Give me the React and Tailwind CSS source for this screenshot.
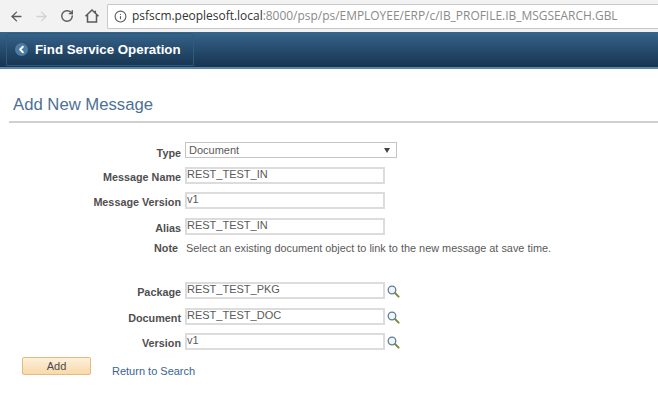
import React from 'react';
import { ArrowLeft, ArrowRight, RotateCw, Info, ChevronLeft } from 'lucide-react';

const Label = ({ children, className = '' }) => (
  <div className={`w-[185px] shrink-0 text-right text-[10.8px] leading-[13px] font-bold text-[#4f4f4f] pr-[4px] ${className}`}>
    {children}
  </div>
);

const SearchIcon = () => (
  <svg width="14" height="14" viewBox="0 0 14 14" className="ml-[1px] mt-[2px] shrink-0">
    <circle cx="6" cy="6" r="3.8" fill="#eef4f8" stroke="#5c7f95" strokeWidth="1.3" />
    <path d="M9 9l3.6 3.6" stroke="#7d8a45" strokeWidth="2" strokeLinecap="round" />
  </svg>
);

const Field = ({ label, value, className = '', search = false }) => (
  <div className={`flex items-start ${className}`}>
    <Label className="pt-[4px]">{label}</Label>
    <div className="w-[200px] h-[17px] border-2 border-[#dcdcdc] bg-white text-[11px] leading-[11px] text-[#5a5a5a] overflow-hidden">
      {value}
    </div>
    {search && <SearchIcon />}
  </div>
);

export default function App() {
  return (
    <div className="w-[658px] h-[415px] overflow-hidden bg-white font-['Liberation_Sans',Arial,sans-serif]">
      {/* Browser bar */}
      <div className="h-[32px] bg-[#f2f2f2] flex items-center pl-[9px]">
        <ArrowLeft className="w-[15px] h-[15px] text-[#5a5a5a]" strokeWidth={2.2} />
        <ArrowRight className="w-[15px] h-[15px] text-[#d2d2d2] ml-[10px]" strokeWidth={2.2} />
        <RotateCw className="w-[14px] h-[14px] text-[#5a5a5a] ml-[11px]" strokeWidth={2.4} />
        <svg width="16" height="16" viewBox="0 0 16 16" fill="none" stroke="#5a5a5a" strokeWidth="1.5" className="ml-[10px] shrink-0">
          <path d="M1.5 8.2 8 2l6.5 6.2M3.5 7v7h9V7M11.3 2.8v2.4" />
        </svg>
        <div className="ml-[7px] flex-1 h-[25px] bg-white border border-[#c8c8c8] border-r-0 rounded-l-[2px] flex items-center pl-[6px] text-[11.95px] font-['Open_Sans',sans-serif] whitespace-nowrap">
          <Info className="w-[13px] h-[13px] text-[#5a5a5a] mr-[5px] shrink-0" strokeWidth={2} />
          <span className="text-[#333]">psfscm.peoplesoft.local</span>
          <span className="text-[#8a8a8a]">:8000/psp/ps/EMPLOYEE/ERP/c/IB_PROFILE.IB_MSGSEARCH.GBL</span>
        </div>
      </div>

      {/* Nav banner */}
      <div className="h-[37px] bg-gradient-to-b from-[#37658c] to-[#173450] border-b-2 border-[#5b87ab] pl-[6px] pt-[1px]">
        <div className="h-[33px] w-[188px] border border-[#2f5a7f] rounded-t-[3px] flex items-center pl-[8px]">
          <div className="w-[13px] h-[13px] rounded-full bg-[#4d7ba1] flex items-center justify-center">
            <ChevronLeft className="w-[11px] h-[11px] text-white" strokeWidth={4} />
          </div>
          <span className="ml-[7px] text-[13.3px] font-bold text-white">Find Service Operation</span>
        </div>
      </div>

      {/* Title */}
      <div className="ml-[9px] mt-[26px] h-[28px] pt-[1px] border-b-2 border-[#d0d0d0] pl-[4px] text-[16.7px] leading-[18px] text-[#4d7095]">
        Add New Message
      </div>

      {/* Form */}
      <div className="mt-[19px]">
        <div className="flex items-start">
          <Label className="pt-[5px]">Type</Label>
          <div className="w-[212px] h-[16px] border border-[#c4c4c4] bg-white flex items-center justify-between pl-[3px] pr-[6px] text-[11px] text-[#5a5a5a]">
            <span>Document</span>
            <span className="w-0 h-0 border-l-[3px] border-r-[3px] border-t-[5px] border-l-transparent border-r-transparent border-t-[#444]" />
          </div>
        </div>
        <Field label="Message Name" value="REST_TEST_IN" className="mt-[7px]" />
        <Field label="Message Version" value="v1" className="mt-[8px]" />
        <Field label="Alias" value="REST_TEST_IN" className="mt-[9px]" />
        <div className="flex items-start mt-[7px]">
          <Label className="pr-[7px]">Note</Label>
          <div className="text-[10.9px] leading-[13px] text-[#5a5a5a] whitespace-nowrap pl-[1px]">
            Select an existing document object to link to the new message at save time.
          </div>
        </div>
        <Field label="Package" value="REST_TEST_PKG" search className="mt-[27px]" />
        <Field label="Document" value="REST_TEST_DOC" search className="mt-[9px]" />
        <Field label="Version" value="v1" search className="mt-[8px]" />
        <div className="flex items-start ml-[22px] mt-[7px]">
          <button className="w-[69px] h-[18px] rounded-[2px] border border-[#e8b87c] bg-gradient-to-b from-[#fdf0dc] to-[#f8d9aa] text-[11px] leading-[14px] text-[#4a4a4a]">
            Add
          </button>
          <span className="ml-[21px] mt-[8px] text-[11px] leading-[13px] text-[#3a6592]">Return to Search</span>
        </div>
      </div>
    </div>
  );
}
